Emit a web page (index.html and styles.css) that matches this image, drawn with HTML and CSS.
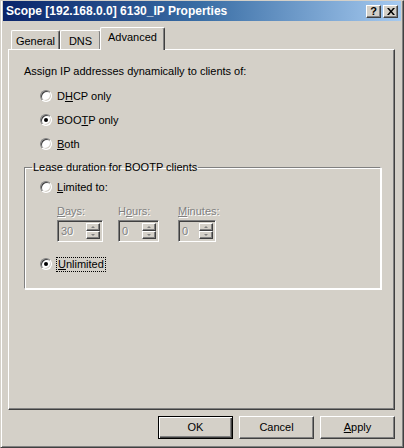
FILE: index.html
```html
<!DOCTYPE html>
<html>
<head>
<meta charset="utf-8">
<link rel="stylesheet" href="styles.css">
</head>
<body>
<div class="window">
  <div class="titlebar">
    <span class="title">Scope [192.168.0.0] 6130_IP Properties</span>
    <div class="tbtns">
      <span class="tbtn">?</span>
      <span class="tbtn close"><svg width="8" height="7" viewBox="0 0 8 7"><path d="M0 0h2l2 2.5L6 0h2L5 3.5 8 7H6L4 4.5 2 7H0l3-3.5z" fill="#000"/></svg></span>
    </div>
  </div>
  <div class="content">
    <div class="tabs">
      <div class="tab t-general">General</div>
      <div class="tab t-dns">DNS</div>
      <div class="tab active">Advanced</div>
    </div>
    <div class="panel">
      <div class="intro">Assign IP addresses dynamically to clients of:</div>
      <div class="radios">
        <div class="radio"><span class="rb"></span><span>D<u>H</u>CP only</span></div>
        <div class="radio"><span class="rb on"></span><span>BOO<u>T</u>P only</span></div>
        <div class="radio"><span class="rb"></span><span><u>B</u>oth</span></div>
      </div>
      <fieldset class="group">
        <legend>Lease duration for BOOTP clients</legend>
        <div class="radio"><span class="rb"></span><span><u>L</u>imited to:</span></div>
        <div class="fields">
          <div class="field f-days">
            <div class="flabel"><u>D</u>ays:</div>
            <div class="spin"><span class="val">30</span><span class="arrows"><span class="ar up"></span><span class="ar down"></span></span></div>
          </div>
          <div class="field f-hours">
            <div class="flabel">H<u>o</u>urs:</div>
            <div class="spin"><span class="val">0</span><span class="arrows"><span class="ar up"></span><span class="ar down"></span></span></div>
          </div>
          <div class="field f-min">
            <div class="flabel"><u>M</u>inutes:</div>
            <div class="spin"><span class="val">0</span><span class="arrows"><span class="ar up"></span><span class="ar down"></span></span></div>
          </div>
        </div>
        <div class="radio unl"><span class="rb on"></span><span class="focus"><u>U</u>nlimited</span></div>
      </fieldset>
    </div>
    <div class="buttons">
      <div class="btn def">OK</div>
      <div class="btn">Cancel</div>
      <div class="btn"><u>A</u>pply</div>
    </div>
  </div>
</div>
</body>
</html>
```
FILE: styles.css
```css
* { box-sizing: border-box; }
html, body { margin: 0; padding: 0; background: #d4d0c8; }
body {
  font-family: "Liberation Sans", Arial, sans-serif;
  font-size: 11px;
  line-height: 13px;
  color: #000;
}
.window {
  width: 404px;
  height: 448px;
  background: #d4d0c8;
  border: 1px solid;
  border-color: #d4d0c8 #404040 #404040 #d4d0c8;
  box-shadow: inset 1px 0 0 #fff, inset -1px -1px 0 #808080;
  padding: 0 2px 2px 2px;
  display: flex;
  flex-direction: column;
}
.titlebar {
  height: 20px;
  background: linear-gradient(90deg, #0a246a 0%, #3a6ea5 50%, #a6caf0 100%);
  display: flex;
  align-items: center;
  justify-content: space-between;
  padding: 1px 3px 0 3px;
}
.title {
  color: #fff;
  font-weight: bold;
  font-size: 12px;
}
.tbtns { display: flex; gap: 2px; }
.tbtn {
  width: 15px;
  height: 13px;
  background: #d4d0c8;
  border: 1px solid;
  border-color: #fff #404040 #404040 #fff;
  box-shadow: inset -1px -1px 0 #808080;
  font-weight: bold;
  font-size: 11px;
  line-height: 11px;
  display: flex;
  align-items: center;
  justify-content: center;
}
.content {
  flex: 1;
  padding: 5px 5px 0 5px;
  display: flex;
  flex-direction: column;
}
.tabs {
  display: flex;
  align-items: flex-end;
  height: 23px;
  padding-left: 3px;
  position: relative;
  z-index: 1;
}
.tab {
  height: 19px;
  padding-top: 4px;
  text-align: center;
  border: 1px solid #fff;
  border-bottom: none;
  border-right-color: #404040;
  border-radius: 2px 2px 0 0;
  box-shadow: inset -1px 0 0 #808080;
  background: #d4d0c8;
}
.t-general { width: 49px; }
.t-dns { width: 41px; }
.tab.active {
  height: 23px;
  width: 65px;
  padding-top: 3px;
  margin-left: -1px;
  margin-bottom: -1px;
}
.panel {
  height: 361px;
  width: 387px;
  border: 1px solid;
  border-color: #fff #404040 #404040 #fff;
  box-shadow: inset -1px -1px 0 #808080;
  padding: 15px 13px 0 15px;
}
.intro { height: 13px; }
.radios {
  padding-left: 16px;
  margin-top: 11px;
  display: flex;
  flex-direction: column;
  gap: 10px;
}
.radio {
  display: flex;
  align-items: center;
  gap: 5px;
  height: 14px;
}
.rb {
  width: 12px;
  height: 12px;
  border-radius: 50%;
  background: #fff;
  border: 1px solid;
  border-color: #808080 #fff #fff #808080;
  box-shadow: inset 1px 1px 0 #404040, inset -1px -1px 0 #d4d0c8;
  position: relative;
  flex: none;
}
.rb.on::after {
  content: "";
  position: absolute;
  left: 3px;
  top: 3px;
  width: 4px;
  height: 4px;
  border-radius: 50%;
  background: #000;
}
.group {
  margin: 10px 0 0 0;
  border: 1px solid;
  border-color: #808080 #fff #fff #808080;
  box-shadow: 1px 1px 0 #fff, inset 1px 1px 0 #fff;
  padding: 6px 0 0 15px;
  width: 357px;
  height: 128px;
}
.group legend {
  padding: 0 1px;
  margin-left: -8px;
  line-height: 13px;
}
.fields {
  display: flex;
  padding-left: 17px;
  margin-top: 11px;
}
.field { display: flex; flex-direction: column; gap: 2px; }
.f-days .spin { width: 46px; }
.f-hours { margin-left: 15px; }
.f-hours .spin { width: 41px; }
.f-min { margin-left: 19px; }
.f-min .spin { width: 38px; }
.flabel {
  color: #808080;
  text-shadow: 1px 1px 0 #fff;
  height: 13px;
}
.spin {
  height: 22px;
  border: 1px solid;
  border-color: #808080 #fff #fff #808080;
  box-shadow: inset 1px 1px 0 #404040, inset -1px -1px 0 #d4d0c8;
  background: #d4d0c8;
  display: flex;
  justify-content: space-between;
  padding: 2px 2px 2px 3px;
}
.val {
  color: #808080;
  text-shadow: 1px 1px 0 #fff;
  line-height: 17px;
}
.arrows { display: flex; flex-direction: column; width: 14px; }
.ar {
  flex: 1;
  border: 1px solid;
  border-color: #fff #404040 #404040 #fff;
  box-shadow: inset -1px -1px 0 #808080;
  position: relative;
}
.ar::after {
  content: "";
  position: absolute;
  left: 4px;
  top: 2px;
  border-left: 2px solid transparent;
  border-right: 2px solid transparent;
}
.ar.up::after { border-bottom: 2px solid #808080; }
.ar.down::after { border-top: 2px solid #808080; }
.unl { margin-top: 15px; }
.focus { outline: 1px dotted #000; padding: 0 1px; }
.buttons {
  display: flex;
  justify-content: flex-end;
  gap: 6px;
  margin-top: 6px;
  padding-right: 1px;
}
.btn {
  width: 75px;
  height: 23px;
  border: 1px solid;
  border-color: #fff #404040 #404040 #fff;
  box-shadow: inset -1px -1px 0 #808080;
  text-align: center;
  line-height: 21px;
}
.btn.def {
  border: 1px solid #000;
  box-shadow: inset 1px 1px 0 #fff, inset -1px -1px 0 #404040, inset -2px -2px 0 #808080;
}
```
